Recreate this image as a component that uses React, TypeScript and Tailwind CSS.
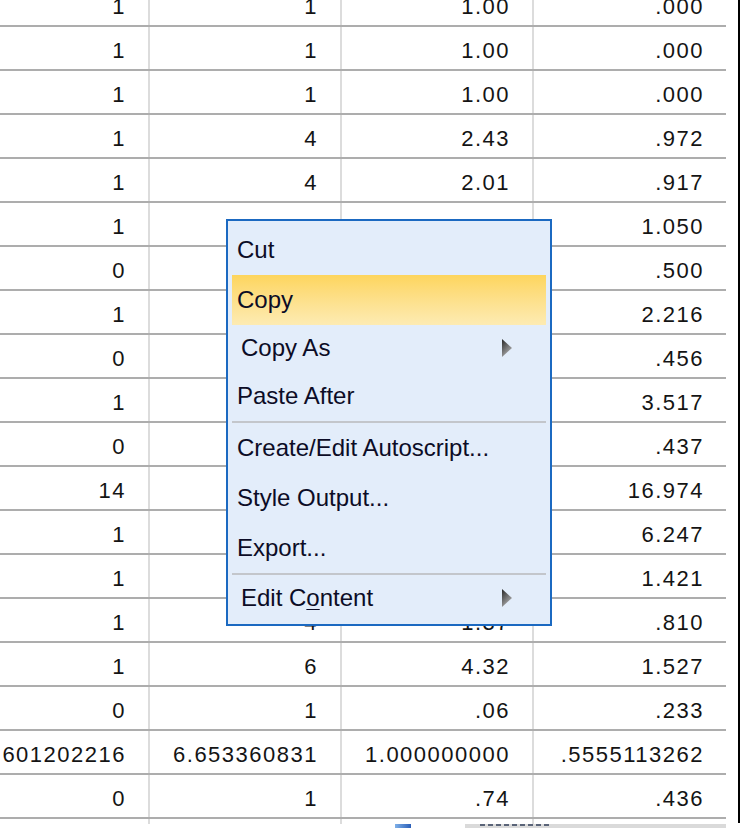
import React from 'react';

// table values, first row is cut off at the top of the pane
const rows: string[][] = [
  ['1', '1', '1.00', '.000'],
  ['1', '1', '1.00', '.000'],
  ['1', '1', '1.00', '.000'],
  ['1', '4', '2.43', '.972'],
  ['1', '4', '2.01', '.917'],
  ['1', '1', '2.03', '1.050'],
  ['0', '1', '.50', '.500'],
  ['1', '5', '2.48', '2.216'],
  ['0', '2', '.46', '.456'],
  ['1', '9', '3.48', '3.517'],
  ['0', '2', '.33', '.437'],
  ['14', '60', '33.94', '16.974'],
  ['1', '22', '9.05', '6.247'],
  ['1', '5', '2.58', '1.421'],
  ['1', '4', '1.37', '.810'],
  ['1', '6', '4.32', '1.527'],
  ['0', '1', '.06', '.233'],
  ['3.601202216', '6.653360831', '1.000000000', '.5555113262'],
  ['0', '1', '.74', '.436'],
];

const colClass = [
  'w-[150px] border-r-2 border-[#dcdcdc]',
  'w-[192px] border-r-2 border-[#dcdcdc]',
  'w-[192px] border-r-2 border-[#dcdcdc]',
  'w-[192px]',
];

const Arrow = ({ id }: { id: string }) => (
  <svg width="10" height="18" viewBox="0 0 10 18">
    <defs>
      <linearGradient id={id} x1="0" y1="0" x2="0.6" y2="1">
        <stop offset="0" stopColor="#262626" />
        <stop offset="1" stopColor="#b4b4b4" />
      </linearGradient>
    </defs>
    <polygon points="0,0 10,9 0,18" fill={`url(#${id})`} />
  </svg>
);

type ItemProps = {
  h: string;
  children: React.ReactNode;
  sub?: boolean;
  active?: boolean;
};

const MenuItem = ({ h, children, sub, active }: ItemProps) => (
  <div
    className={`flex shrink-0 items-center justify-between ${h} ${sub ? 'pl-[9px] pr-[34px]' : 'pl-[5px]'} ${
      active ? 'bg-linear-to-b from-[#fdd55c] to-[#fdebb2]' : ''
    }`}
  >
    <span className="whitespace-nowrap">{children}</span>
    {sub && <Arrow id={`arr-${h}`} />}
  </div>
);

const Separator = ({ h }: { h: string }) => (
  <div className={`shrink-0 pt-px ${h}`}>
    <div className="h-[2px] bg-[#c3c6cb]" />
  </div>
);

const ContextMenu = () => (
  <div
    className="absolute left-[226px] top-[219px] flex h-[407px] w-[326px] flex-col border-2 border-[#1b69c1] bg-[#e3edfa] px-[4px] pt-[4px] text-[24px] leading-none text-[#0c0c26]"
    style={{ fontFamily: '"Liberation Sans", Arial, sans-serif' }}
  >
    <MenuItem h="h-[50px]">Cut</MenuItem>
    <MenuItem h="h-[50px]" active>Copy</MenuItem>
    <MenuItem h="h-[46px]" sub>Copy As</MenuItem>
    <MenuItem h="h-[49px]">Paste After</MenuItem>
    <Separator h="h-[3px]" />
    <MenuItem h="h-[50px]">Create/Edit Autoscript...</MenuItem>
    <MenuItem h="h-[50px]">Style Output...</MenuItem>
    <MenuItem h="h-[49px]">Export...</MenuItem>
    <Separator h="h-[4px]" />
    <MenuItem h="h-[44px]" sub>
      Edit C<span className="underline decoration-1 underline-offset-[3px]">o</span>ntent
    </MenuItem>
  </div>
);

export default function App() {
  return (
    <div
      className="relative h-[828px] w-[755px] overflow-hidden bg-white"
      style={{ fontFamily: '"Liberation Sans", Arial, sans-serif' }}
    >
      <div className="flex">
        <div className="w-[726px] shrink-0">
          <div className="-mt-[17px]">
            {rows.map((r, i) => (
              <div key={i} className="flex h-[44px] border-b-2 border-[#adadad]">
                {r.map((v, j) => (
                  <div
                    key={j}
                    className={`flex items-center justify-end overflow-hidden whitespace-nowrap pr-[22px] pt-[5px] text-[22px] leading-none tracking-[1.5px] text-[#141414] ${colClass[j]}`}
                  >
                    {v}
                  </div>
                ))}
              </div>
            ))}
            {/* grid lines run on a little past the last row */}
            <div className="flex h-[5px]">
              {colClass.map((c, j) => (
                <div key={j} className={c} />
              ))}
            </div>
            {/* top edge of the next output item */}
            <div className="flex h-[4px] items-stretch">
              <div className="ml-[395px] w-[16px] bg-linear-to-r from-[#7fb0e8] to-[#2b5fb8]" />
              <div className="ml-[54px] flex flex-1 items-start gap-[3px] bg-[#dadada] pl-[15px]">
                {[0, 1, 2, 3, 4, 5, 6, 7, 8].map(k => (
                  <div key={k} className="h-[2px] w-[5px] bg-[#5a6478]" />
                ))}
              </div>
            </div>
          </div>
        </div>
        <div className="ml-[12px] h-[823px] w-[2px] shrink-0 bg-black" />
      </div>
      <ContextMenu />
    </div>
  );
}
